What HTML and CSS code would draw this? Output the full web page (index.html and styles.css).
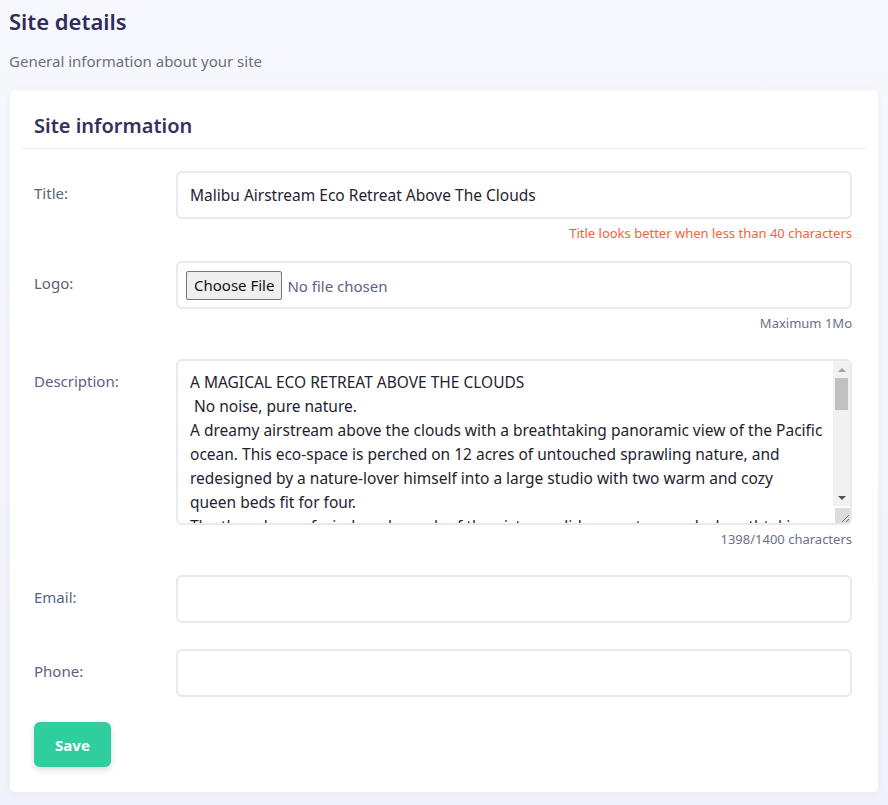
FILE: index.html
```html
<!DOCTYPE html>
<html lang="en">
<head>
<meta charset="utf-8">
<title>Site details</title>
<link rel="stylesheet" href="styles.css">
</head>
<body>
<div class="page">
  <header class="page-head">
    <h1 class="page-title">Site details</h1>
    <p class="page-sub">General information about your site</p>
  </header>
  <section class="card">
    <div class="card-head"><h2 class="card-title">Site information</h2></div>
    <form class="card-body">
      <div class="row row-title">
        <label class="label" for="title">Title:</label>
        <div class="field">
          <input class="input" id="title" type="text" value="Malibu Airstream Eco Retreat Above The Clouds">
          <div class="hint hint-error">Title looks better when less than 40 characters</div>
        </div>
      </div>
      <div class="row row-logo">
        <label class="label" for="logo">Logo:</label>
        <div class="field">
          <div class="input file-box"><input class="file" id="logo" type="file"></div>
          <div class="hint">Maximum 1Mo</div>
        </div>
      </div>
      <div class="row row-desc">
        <label class="label" for="desc">Description:</label>
        <div class="field">
          <div class="ta-wrap">
            <textarea class="input textarea" id="desc">A MAGICAL ECO RETREAT ABOVE THE CLOUDS
 No noise, pure nature.
A dreamy airstream above the clouds with a breathtaking panoramic view of the Pacific ocean. This eco-space is perched on 12 acres of untouched sprawling nature, and redesigned by a nature-lover himself into a large studio with two warm and cozy
queen beds fit for four.
The three bays of windows by each of the pictures slide open to reveal a breathtaking view of the mountains and the ocean. Wake up to the sound of birds and fall asleep under a sky full of stars. The space was built with reclaimed wood and solar power, and everything was designed to let you disconnect and reconnect with nature.</textarea>
            <div class="fake-scroll" aria-hidden="true">
              <span class="sb-btn sb-up"></span>
              <span class="sb-track"><span class="sb-thumb"></span></span>
              <span class="sb-btn sb-down"></span>
            </div>
          </div>
          <div class="hint">1398/1400 characters</div>
        </div>
      </div>
      <div class="row row-email">
        <label class="label" for="email">Email:</label>
        <div class="field"><input class="input" id="email" type="email"></div>
      </div>
      <div class="row row-phone">
        <label class="label" for="phone">Phone:</label>
        <div class="field"><input class="input" id="phone" type="tel"></div>
      </div>
      <button class="save" type="button">Save</button>
    </form>
  </section>
</div>
</body>
</html>
```
FILE: styles.css
```css
* { box-sizing: border-box; }
html, body { margin: 0; padding: 0; }
body {
  background: linear-gradient(180deg, #f7f8fd 0%, #f1f2f9 100%);
  font-family: "Noto Sans", "Open Sans", sans-serif;
  color: #2f2c5c;
  height: 805px;
  overflow: hidden;
}
.page { padding: 0 10px; }
.page-head { padding: 6px 0 0 0; margin-left: -1px; }
.page-title {
  margin: 0;
  font-size: 22px;
  font-weight: 600;
  line-height: 30px;
  color: #2f2c5c;
}
.page-sub {
  margin: 15px 0 0 0;
  font-size: 15px;
  line-height: 20px;
  color: #6b6f80;
}
.card {
  margin-top: 19px;
  background: #fff;
  border-radius: 5px;
  box-shadow: 0 1px 6px rgba(60, 60, 120, 0.06);
  padding-bottom: 25px;
}
.card-head {
  margin: 0 10px;
  padding: 22px 14px 0;
  height: 59px;
  border-bottom: 1px solid #f0f0f4;
}
.card-title {
  margin: 0;
  font-size: 20px;
  font-weight: 600;
  line-height: 28px;
  color: #35315e;
}
.card-body { padding: 22px 26px 0 24px; }
.row { display: flex; align-items: flex-start; }
.label {
  width: 142px;
  flex: none;
  padding-top: 12px;
  font-size: 15px;
  line-height: 20px;
  color: #5b6282;
}
.field { flex: 1; display: flex; flex-direction: column; }
.input {
  display: block;
  width: 100%;
  height: 48px;
  border: 2px solid #e9e9ec;
  border-radius: 6px;
  background: #fff;
  padding: 0 12px;
  font-family: inherit;
  font-size: 15.5px;
  color: #1f2330;
  outline: none;
}
.file-box { display: flex; align-items: center; padding: 0 8px; }
.file {
  font-family: inherit;
  font-size: 15px;
  color: #5b6282;
}
.file::file-selector-button {
  font-family: inherit;
  font-size: 15px;
  color: #111;
  background: #efefef;
  border: 1px solid #767676;
  border-radius: 2px;
  padding: 2px 7px;
  margin-right: 5px;
  height: 29px;
}
.ta-wrap { position: relative; }
.textarea {
  height: 166px;
  padding: 9px 6px 10px 12px;
  line-height: 24px;
  resize: vertical;
  overflow-y: scroll;
}
.textarea::-webkit-scrollbar { width: 17px; background: #f1f1f1; }
.textarea::-webkit-scrollbar-corner { background: #dcdcdc; }
.textarea::-webkit-resizer {
  background: #dcdcdc url("data:image/svg+xml,%3Csvg xmlns='http://www.w3.org/2000/svg' width='17' height='17'%3E%3Cpath d='M15 8L8 15M15 12L12 15' stroke='%23777' stroke-width='1'/%3E%3C/svg%3E") center no-repeat;
}
.fake-scroll {
  position: absolute;
  top: 2px;
  right: 2px;
  width: 17px;
  height: 145px;
  background: #f1f1f1;
  display: flex;
  flex-direction: column;
  pointer-events: none;
}
.sb-btn {
  flex: none;
  height: 17px;
  display: flex;
  align-items: center;
  justify-content: center;
}
.sb-btn::before {
  content: "";
  width: 0;
  height: 0;
  border-left: 4px solid transparent;
  border-right: 4px solid transparent;
}
.sb-up::before { border-bottom: 4px solid #a3a3a3; }
.sb-down::before { border-top: 4px solid #505050; }
.sb-track { flex: 1; padding: 0 2px; }
.sb-thumb {
  display: block;
  height: 32px;
  background: #c1c1c1;
}
.hint {
  text-align: right;
  font-size: 13px;
  line-height: 18px;
  margin-top: 5px;
  color: #6b6f85;
}
.hint-error { color: #f4623f; }
.row-title { margin-bottom: 19px; }
.row-logo { margin-bottom: 27px; }
.row-desc { margin-bottom: 27px; }
.row-email { margin-bottom: 26px; }
.row-phone { margin-bottom: 25px; }
.save {
  display: block;
  width: 77px;
  height: 45px;
  border: none;
  border-radius: 6px;
  background: #2fce9f;
  color: #fff;
  font-family: inherit;
  font-size: 15px;
  font-weight: 700;
  box-shadow: 0 3px 6px rgba(0, 0, 0, 0.14);
}
```
